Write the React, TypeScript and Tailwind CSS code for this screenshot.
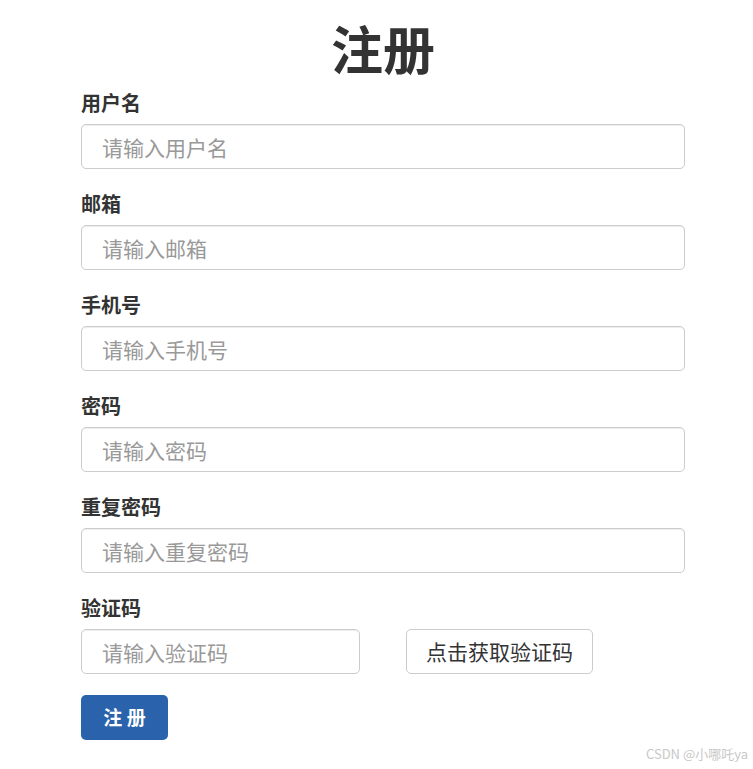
import { useState } from "react";

const fields = [
  { label: "用户名", placeholder: "请输入用户名", type: "text" },
  { label: "邮箱", placeholder: "请输入邮箱", type: "text" },
  { label: "手机号", placeholder: "请输入手机号", type: "text" },
  { label: "密码", placeholder: "请输入密码", type: "password" },
  { label: "重复密码", placeholder: "请输入重复密码", type: "password" },
];

const font = "font-['Noto_Sans_CJK_SC','Noto_Sans',sans-serif]";

export default function App() {
  const [values, setValues] = useState<Record<string, string>>({});

  return (
    <div className={`relative min-h-[769px] w-[753px] bg-white ${font} text-[#333]`}>
      <div className="ml-[81px] w-[604px] pt-[19px]">
        {/* Title */}
        <h1 className="text-center text-[52px] font-bold leading-[58px] mb-[14px]">注册</h1>

        {fields.map((f) => (
          <div key={f.label} className="mb-[23px]">
            <label className="block text-[20px] font-bold leading-[24px] mb-[9px]">{f.label}</label>
            <input
              type={f.type}
              placeholder={f.placeholder}
              value={values[f.label] || ""}
              onChange={(e) => setValues({ ...values, [f.label]: e.target.value })}
              className="block w-full h-[45px] rounded-[5px] border border-[#ccc] px-5 text-[21px] outline-none placeholder:text-[#999] shadow-[inset_0_1px_1px_rgba(0,0,0,0.075)]"
            />
          </div>
        ))}

        {/* 验证码 */}
        <div className="mb-[21px]">
          <label className="block text-[20px] font-bold leading-[24px] mb-[9px]">验证码</label>
          <div className="flex items-center gap-[46px]">
            <input
              type="text"
              placeholder="请输入验证码"
              className="block w-[279px] h-[45px] rounded-[5px] border border-[#ccc] px-5 text-[21px] outline-none placeholder:text-[#999] shadow-[inset_0_1px_1px_rgba(0,0,0,0.075)]"
            />
            <button className="h-[45px] w-[187px] rounded-[5px] border border-[#ccc] bg-white text-[21px] text-[#333]">
              点击获取验证码
            </button>
          </div>
        </div>

        <button className="h-[45px] w-[87px] rounded-[5px] bg-[#2a63ab] text-[19px] font-bold text-white">
          注 册
        </button>
      </div>

      <div className="absolute right-[5px] top-[744px] text-[13px] text-[#c8c8c8]">CSDN @小哪吒ya</div>
    </div>
  );
}
